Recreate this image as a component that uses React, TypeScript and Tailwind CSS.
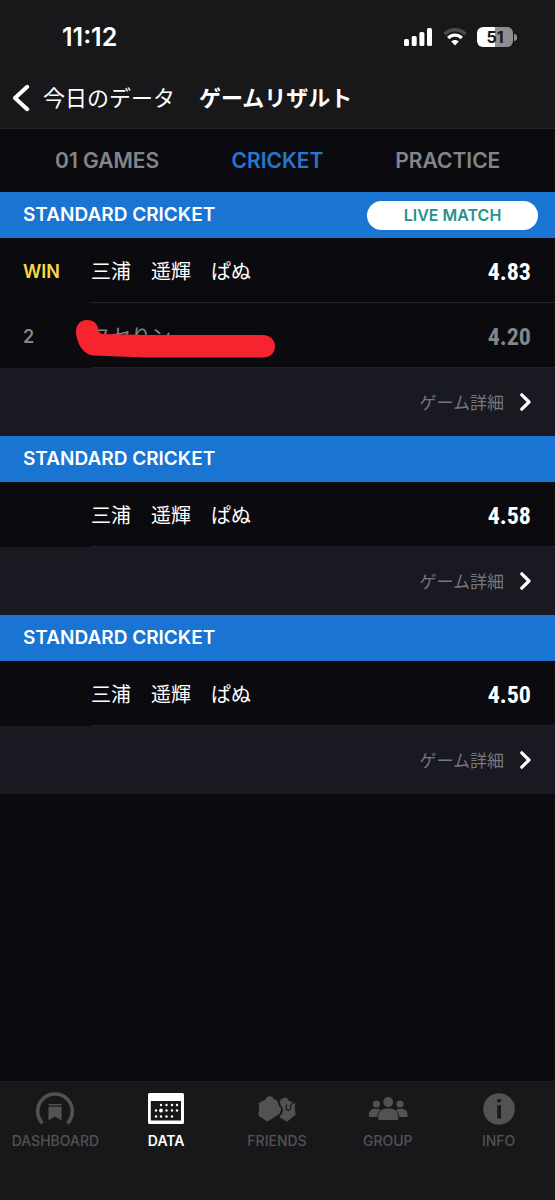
import React from 'react';
import clsx from 'clsx';

type Player = {
  rank: string;
  name: string;
  score: string;
  muted?: boolean;
  hidden?: boolean;
};

type Game = {
  title: string;
  live?: boolean;
  players: Player[];
};

const games: Game[] = [
  {
    title: 'STANDARD CRICKET',
    live: true,
    players: [
      { rank: 'WIN', name: '三浦　遥輝　ぱぬ', score: '4.83' },
      { rank: '2', name: 'ヌセりン', score: '4.20', muted: true, hidden: true },
    ],
  },
  {
    title: 'STANDARD CRICKET',
    players: [{ rank: '', name: '三浦　遥輝　ぱぬ', score: '4.58' }],
  },
  {
    title: 'STANDARD CRICKET',
    players: [{ rank: '', name: '三浦　遥輝　ぱぬ', score: '4.50' }],
  },
];

const tabs = ['01 GAMES', 'CRICKET', 'PRACTICE'];

function StatusBar() {
  return (
    <div className="flex h-[74px] items-center justify-between pl-[62px] pr-[38px]">
      <span className="text-[25px] font-semibold leading-6">11:12</span>
      <div className="flex items-center gap-[10px]">
        <svg width="29" height="20" viewBox="0 0 29 20" fill="#fff">
          <rect x="0" y="12" width="5" height="7" rx="1.5" />
          <rect x="7.7" y="9" width="5" height="10" rx="1.5" />
          <rect x="15.4" y="5" width="5" height="14" rx="1.5" />
          <rect x="23" y="1" width="5" height="18" rx="1.5" />
        </svg>
        <svg width="24" height="20" viewBox="0 0 24 20" fill="none">
          <path d="M1.6 7.2C7.4 1.2 16.6 1.2 22.4 7.2" stroke="#4b4b4e" strokeWidth="3.4" />
          <path d="M5.2 11C9.1 7.1 14.9 7.1 18.8 11" stroke="#fff" strokeWidth="3.4" />
          <path d="M8.3 14.6C10.4 12.6 13.6 12.6 15.7 14.6L12 18.6Z" fill="#fff" />
        </svg>
        <div className="flex items-center gap-px">
          <div className="flex h-5 w-9 items-center justify-center rounded-md bg-linear-to-r from-white from-50% to-[#8e8e90] to-50% text-base font-bold leading-5 text-[#18181a]">
            51
          </div>
          <div className="h-[7px] w-[3px] rounded-r-full bg-[#8e8e90]" />
        </div>
      </div>
    </div>
  );
}

function PlayerRow({ player, last }: { player: Player; last: boolean }) {
  return (
    <li className="flex h-[65px] pl-[23px]">
      <span
        className={clsx(
          'flex w-[68px] items-center pt-[3px] text-lg font-semibold',
          player.muted ? 'text-[#858589]' : 'text-[#f8da43]'
        )}
      >
        {player.rank}
      </span>
      <div
        className={clsx(
          'relative flex flex-1 items-center justify-between border-b pr-6 pt-[3px]',
          last ? 'border-[#202028]' : 'border-[#26262c]',
          player.muted ? 'text-[#858589]' : 'text-white'
        )}
      >
        <span className="text-xl">{player.name}</span>
        <span className="font-['Roboto_Condensed',Roboto,sans-serif] text-2xl font-bold">
          {player.score}
        </span>
        {player.hidden && (
          <svg
            className="absolute -left-4 top-4"
            width="202"
            height="40"
            viewBox="0 0 202 40"
            fill="#f5242f"
          >
            <path d="M1 12C1 5.5 6 1 12 1C18 1 22 4 23 9C23.5 12 24 14.5 28 15L70 16H188C195 16 200 21 200 27.5C200 34 195 38.5 188 38.5H70L18 36.5C7 35 1 22 1 12Z" />
          </svg>
        )}
      </div>
    </li>
  );
}

function GameSection({ game }: { game: Game }) {
  return (
    <section>
      <div className="flex h-[46px] items-center justify-between bg-[#1a75d2] pl-[23px] pr-[17px]">
        <h2 className="text-[19px] font-semibold">{game.title}</h2>
        {game.live && (
          <button
            type="button"
            className="h-[29px] w-[171px] rounded-full bg-white text-base font-semibold text-[#24948a]"
          >
            LIVE MATCH
          </button>
        )}
      </div>
      <ul>
        {game.players.map((player, i) => (
          <PlayerRow key={i} player={player} last={i === game.players.length - 1} />
        ))}
      </ul>
      <a href="#" className="flex h-[68px] items-center justify-end gap-4 bg-[#191921] pr-6 text-[17px] text-[#77777d]">
        <span className="pt-[3px]">ゲーム詳細</span>
        <svg width="11" height="18" viewBox="0 0 11 18" fill="none" stroke="#fff" strokeWidth="3.2">
          <path d="M1.8 1.8L9 9L1.8 16.2" strokeLinecap="round" strokeLinejoin="round" />
        </svg>
      </a>
    </section>
  );
}

function DashboardIcon() {
  return (
    <svg width="40" height="36" viewBox="0 0 40 36">
      <path d="M7.5 32.3A17.3 17.3 0 1 1 32.5 32.3" fill="none" stroke="currentColor" strokeWidth="3.6" />
      <path d="M13.5 13H26.5V14.5H13.5ZM13.5 15.7H26.5V29.5L20 25.5L13.5 29.5Z" fill="currentColor" />
    </svg>
  );
}

function DataIcon() {
  const dots = [
    [13, 12], [18.5, 12], [24, 12], [29, 12],
    [8, 17.5], [18.5, 17.5], [24, 17.5], [29, 17.5],
    [8, 23.5], [13, 23.5], [18.5, 23.5], [24, 23.5],
  ];
  return (
    <svg width="36" height="31" viewBox="0 0 36 31">
      <path
        d="M1.5 0H34.5Q36 0 36 1.5V29.5Q36 31 34.5 31H1.5Q0 31 0 29.5V1.5Q0 0 1.5 0ZM2.8 8V27.5H33V8Z"
        fill="currentColor"
        fillRule="evenodd"
      />
      {dots.map(([x, y]) => (
        <circle key={`${x}-${y}`} cx={x} cy={y} r="1.2" fill="currentColor" />
      ))}
      <circle cx="13" cy="17.5" r="1.9" fill="currentColor" />
    </svg>
  );
}

function FriendsIcon() {
  return (
    <svg width="38" height="28" viewBox="0 0 38 28" fill="currentColor">
      <path d="M0.8 8L7.5 4.5Q8.3 1.3 11.5 1.2Q14.8 1.4 15.8 4.2Q19.5 4.3 20 8L21 10.8L23.3 14L22 18L19 20.5L9.5 26.5L0.8 21L0.4 18L1.2 15Z" />
      <path d="M21.5 6.5Q22.7 3.5 26.5 2.6Q30 3 30.8 6L37.3 8.3L36.7 14L37.8 19.5L29 26.8L21.5 22.3L22 20.8L24 19L25.2 14L23 10.5Z" />
      <path d="M37 7.6C34.4 7.8 33 9 32.8 11.3C32.7 14.5 31.5 15.6 29.8 15.2C28 14.7 27.8 11.8 28.8 9.8" fill="none" stroke="#18181a" strokeWidth="1.3" />
    </svg>
  );
}

function GroupIcon() {
  return (
    <svg width="40" height="24" viewBox="0 0 40 24" fill="currentColor">
      <circle cx="8.5" cy="7" r="3.6" />
      <circle cx="32" cy="7" r="3.6" />
      <path d="M1 20V17.5C1 13.5 4 11.8 8 11.8C10 11.8 11.5 12.2 12.5 13C10.5 14.8 9.5 17 9.2 20Z" />
      <path d="M39.5 20V17.5C39.5 13.5 36.5 11.8 32.5 11.8C30.5 11.8 29 12.2 28 13C30 14.8 31 17 31.3 20Z" />
      <circle cx="20.2" cy="5" r="4.9" />
      <path d="M10.3 23V20C10.3 14 14 11.5 20.2 11.5C26.5 11.5 30.2 14 30.2 20V23Z" />
    </svg>
  );
}

function InfoIcon() {
  return (
    <svg width="32" height="32" viewBox="0 0 32 32">
      <circle cx="16" cy="16" r="15.8" fill="currentColor" />
      <path d="M14.3 6.3H18V9.3H14.3ZM14.3 12.2H18V25.5H14.3Z" fill="#18181a" />
    </svg>
  );
}

const navItems = [
  { label: 'DASHBOARD', icon: <DashboardIcon /> },
  { label: 'DATA', icon: <DataIcon />, active: true },
  { label: 'FRIENDS', icon: <FriendsIcon /> },
  { label: 'GROUP', icon: <GroupIcon /> },
  { label: 'INFO', icon: <InfoIcon /> },
];

export default function App() {
  return (
    <div className="flex min-h-screen flex-col bg-[#0b0b0f] font-[Inter,'Noto_Sans_CJK_JP',sans-serif] text-white">
      <header className="border-b border-[#26262b] bg-[#18181a]">
        <StatusBar />
        <div className="flex h-[54px] items-start pl-3">
          <a href="#" className="flex h-12 items-center gap-[13px] text-[22px]">
            <svg width="18" height="28" viewBox="0 0 18 28" fill="none" stroke="#fff" strokeWidth="4">
              <path d="M15.2 2.8L3 14L15.2 25.2" strokeLinecap="round" strokeLinejoin="round" />
            </svg>
            今日のデータ
          </a>
          <h1 className="ml-6 flex h-12 items-center text-[22px] font-bold">ゲームリザルト</h1>
        </div>
      </header>

      {/* Tabs */}
      <nav className="grid h-[63px] grid-cols-3 px-[22px]">
        {tabs.map((tab) => (
          <button
            key={tab}
            type="button"
            className={clsx('text-[21px] font-semibold', tab === 'CRICKET' ? 'text-[#2678ce]' : 'text-[#858589]')}
          >
            {tab}
          </button>
        ))}
      </nav>

      <main className="flex-1">
        {games.map((game, i) => (
          <GameSection key={i} game={game} />
        ))}
      </main>

      {/* Bottom navigation */}
      <nav className="grid h-[119px] grid-cols-5 border-t border-[#1e1e21] bg-[#18181a] pr-px">
        {navItems.map((item) => (
          <a
            key={item.label}
            href="#"
            className={clsx(
              'flex flex-col items-center pt-2 leading-5',
              item.active ? 'text-sm font-semibold text-white' : 'text-sm font-medium text-[#525254]'
            )}
          >
            <span className="mb-1 flex h-[37px] items-center">{item.icon}</span>
            <span>{item.label}</span>
          </a>
        ))}
      </nav>
    </div>
  );
}
